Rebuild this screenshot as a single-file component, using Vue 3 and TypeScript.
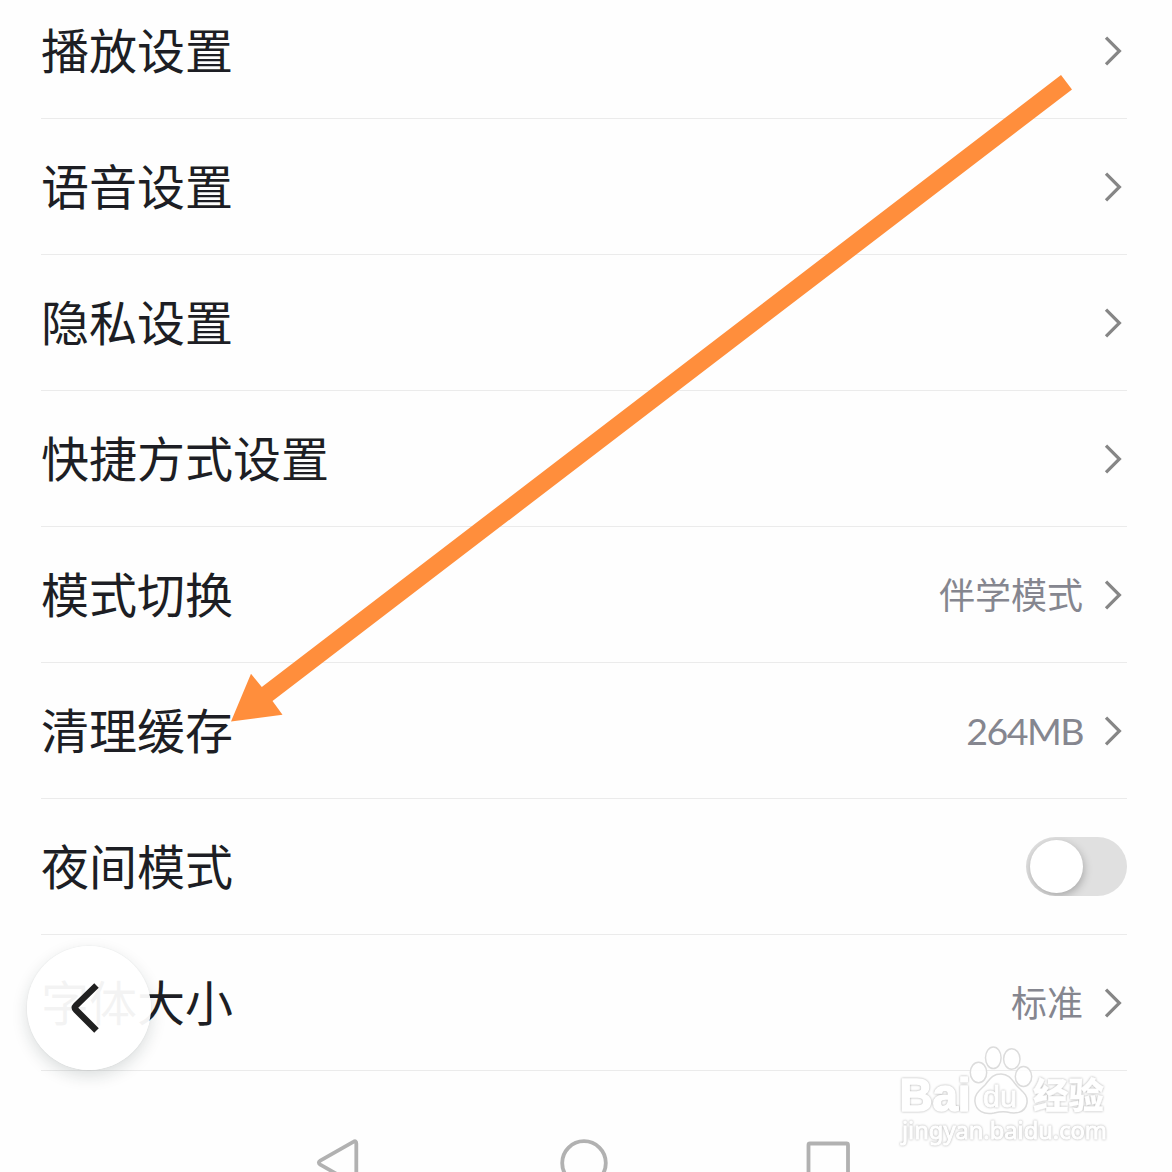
<script setup lang="ts">
interface SettingRow {
  label: string
  value?: string
  latin?: boolean
  toggle?: boolean
}

const rows: SettingRow[] = [
  { label: '播放设置' },
  { label: '语音设置' },
  { label: '隐私设置' },
  { label: '快捷方式设置' },
  { label: '模式切换', value: '伴学模式' },
  { label: '清理缓存', value: '264MB', latin: true },
  { label: '夜间模式', toggle: true },
  { label: '字体大小', value: '标准' },
]
</script>

<template>
  <div class="screen">
    <main class="list">
      <div v-for="row in rows" :key="row.label" class="row">
        <span class="label">{{ row.label }}</span>
        <span v-if="row.toggle" class="toggle"><span class="knob"></span></span>
        <span v-else class="end">
          <span v-if="row.value" class="value" :class="{ latin: row.latin }">{{ row.value }}</span>
          <svg class="chevron" width="20" height="32" viewBox="0 0 20 32">
            <path d="M3 2.600 L16.400 16 L3 29.400" fill="none" stroke="#868686" stroke-width="3.200" />
          </svg>
        </span>
      </div>
    </main>

    <nav class="nav">
      <svg width="1172" height="101" viewBox="0 1071 1172 101" fill="none" stroke="#b1b1b1" stroke-width="3.8" stroke-linejoin="round">
        <path d="M353.300 1141.900 Q356.300 1140 356.300 1143.500 V1182 Q356.300 1185.500 353.300 1183.500 L320.300 1164.600 Q317.300 1162.500 320.300 1160.600 Z" />
        <circle cx="584" cy="1163" r="21.800" />
        <rect x="808.500" y="1143.500" width="39.500" height="40" rx="1.500" />
      </svg>
    </nav>

    <svg class="watermark" width="230" height="112" viewBox="0 0 230 112">
      <g class="paw">
        <ellipse cx="86.500" cy="32.500" rx="8.200" ry="10.200" />
        <ellipse cx="101.300" cy="17.800" rx="7.800" ry="10.800" />
        <ellipse cx="119.800" cy="19" rx="8.200" ry="10.200" />
        <ellipse cx="131.500" cy="36.500" rx="8.200" ry="10" />
        <path d="M109 34 C117 34 120 40 125 46 C131 52 136 55 135 63 C133 74 122 74 115 72 C110 71 106 72 102 73 C92 75 84 71 83 62 C82 54 88 50 93 45 C98 39 100 34 109 34 Z" />
      </g>
      <g class="mark-text">
        <text x="7.500" y="70.500" font-size="46" textLength="71" lengthAdjust="spacingAndGlyphs" font-weight="700">Bai</text>
        <text class="inner" x="91" y="67" font-size="29" textLength="34" lengthAdjust="spacingAndGlyphs" font-weight="400">du</text>
        <text class="cjk" x="141" y="68.500" font-size="36" textLength="71" lengthAdjust="spacingAndGlyphs" font-weight="900">经验</text>
        <text class="url" x="10" y="99" font-size="24" textLength="205" lengthAdjust="spacingAndGlyphs" font-weight="400">jingyan.baidu.com</text>
      </g>
    </svg>

    <button class="back" aria-label="返回">
      <svg width="124" height="124" viewBox="0 0 124 124">
        <path d="M69.500 39.500 L49 59.500 Q46.800 61.800 49 64 L69.500 84.500" fill="none" stroke="#202020" stroke-width="6.400" />
      </svg>
    </button>

    <svg class="arrow" width="1172" height="1172" viewBox="0 0 1172 1172">
      <path d="M1061 75 L1072 89.500 L272.500 701 L282.500 714.800 L231 721.500 L251 673.800 L261.800 687 Z" fill="#ff8e3c" />
    </svg>
  </div>
</template>

<style>
body {
  margin: 0;
  overflow: hidden;
  background: #fefefe;
}
</style>

<style scoped>
.screen {
  position: relative;
  width: 1172px;
  height: 1172px;
  overflow: hidden;
  background: #fefefe;
  font-family: "Noto Sans CJK SC", sans-serif;
}

.list {
  margin: -17px 45px 0 41px;
}

.row {
  box-sizing: border-box;
  height: 136px;
  display: flex;
  align-items: center;
  justify-content: space-between;
  border-bottom: 1px solid #ebebeb;
}

.label {
  padding-bottom: 6px;
  color: #1d1e24;
  font-size: 48px;
  line-height: 70px;
}

.end {
  display: flex;
  align-items: center;
  gap: 20px;
  margin-right: 4px;
}

.value {
  padding-bottom: 3px;
  color: #85868f;
  font-size: 36px;
  line-height: 52px;
}

.latin {
  padding-bottom: 0;
  font-family: Lato, sans-serif;
  font-size: 37.5px;
  letter-spacing: -1.5px;
}

.chevron {
  display: block;
}

.toggle {
  box-sizing: border-box;
  display: flex;
  width: 101px;
  height: 59px;
  padding: 3px 4px;
  border-radius: 30px;
  background: #e0e0e0;
  overflow: hidden;
}

.knob {
  width: 53px;
  height: 53px;
  border-radius: 50%;
  background: #fff;
  box-shadow: 1px 3px 9px rgba(0, 0, 0, 0.25);
}

.nav svg {
  display: block;
}

.watermark {
  position: absolute;
  left: 892px;
  top: 1040px;
}

.paw {
  fill: #fff;
  fill-opacity: 0.85;
  stroke: #dcdcdc;
  stroke-width: 1.5px;
}

.mark-text {
  fill: #fff;
  stroke: #fff;
  stroke-width: 1.6px;
  paint-order: stroke;
  stroke-linejoin: round;
  font-family: "Liberation Sans", sans-serif;
  filter: drop-shadow(0 0 0.8px rgba(0, 0, 0, 0.32));
}

.inner {
  stroke-width: 0.8px;
}

.cjk {
  font-family: "Noto Sans CJK SC", sans-serif;
  stroke-width: 0.3px;
}

.url {
  font-family: "Noto Sans", sans-serif;
  stroke-width: 1px;
}

.back {
  position: absolute;
  left: 27px;
  top: 946px;
  width: 124px;
  height: 124px;
  padding: 0;
  border: 0;
  border-radius: 50%;
  background: rgba(255, 255, 255, 0.95);
  box-shadow: 0 6px 16px rgba(20, 40, 40, 0.15), 0 0 2px rgba(0, 0, 0, 0.08);
}

.back svg {
  display: block;
}

.arrow {
  position: absolute;
  left: 0;
  top: 0;
  pointer-events: none;
}
</style>
